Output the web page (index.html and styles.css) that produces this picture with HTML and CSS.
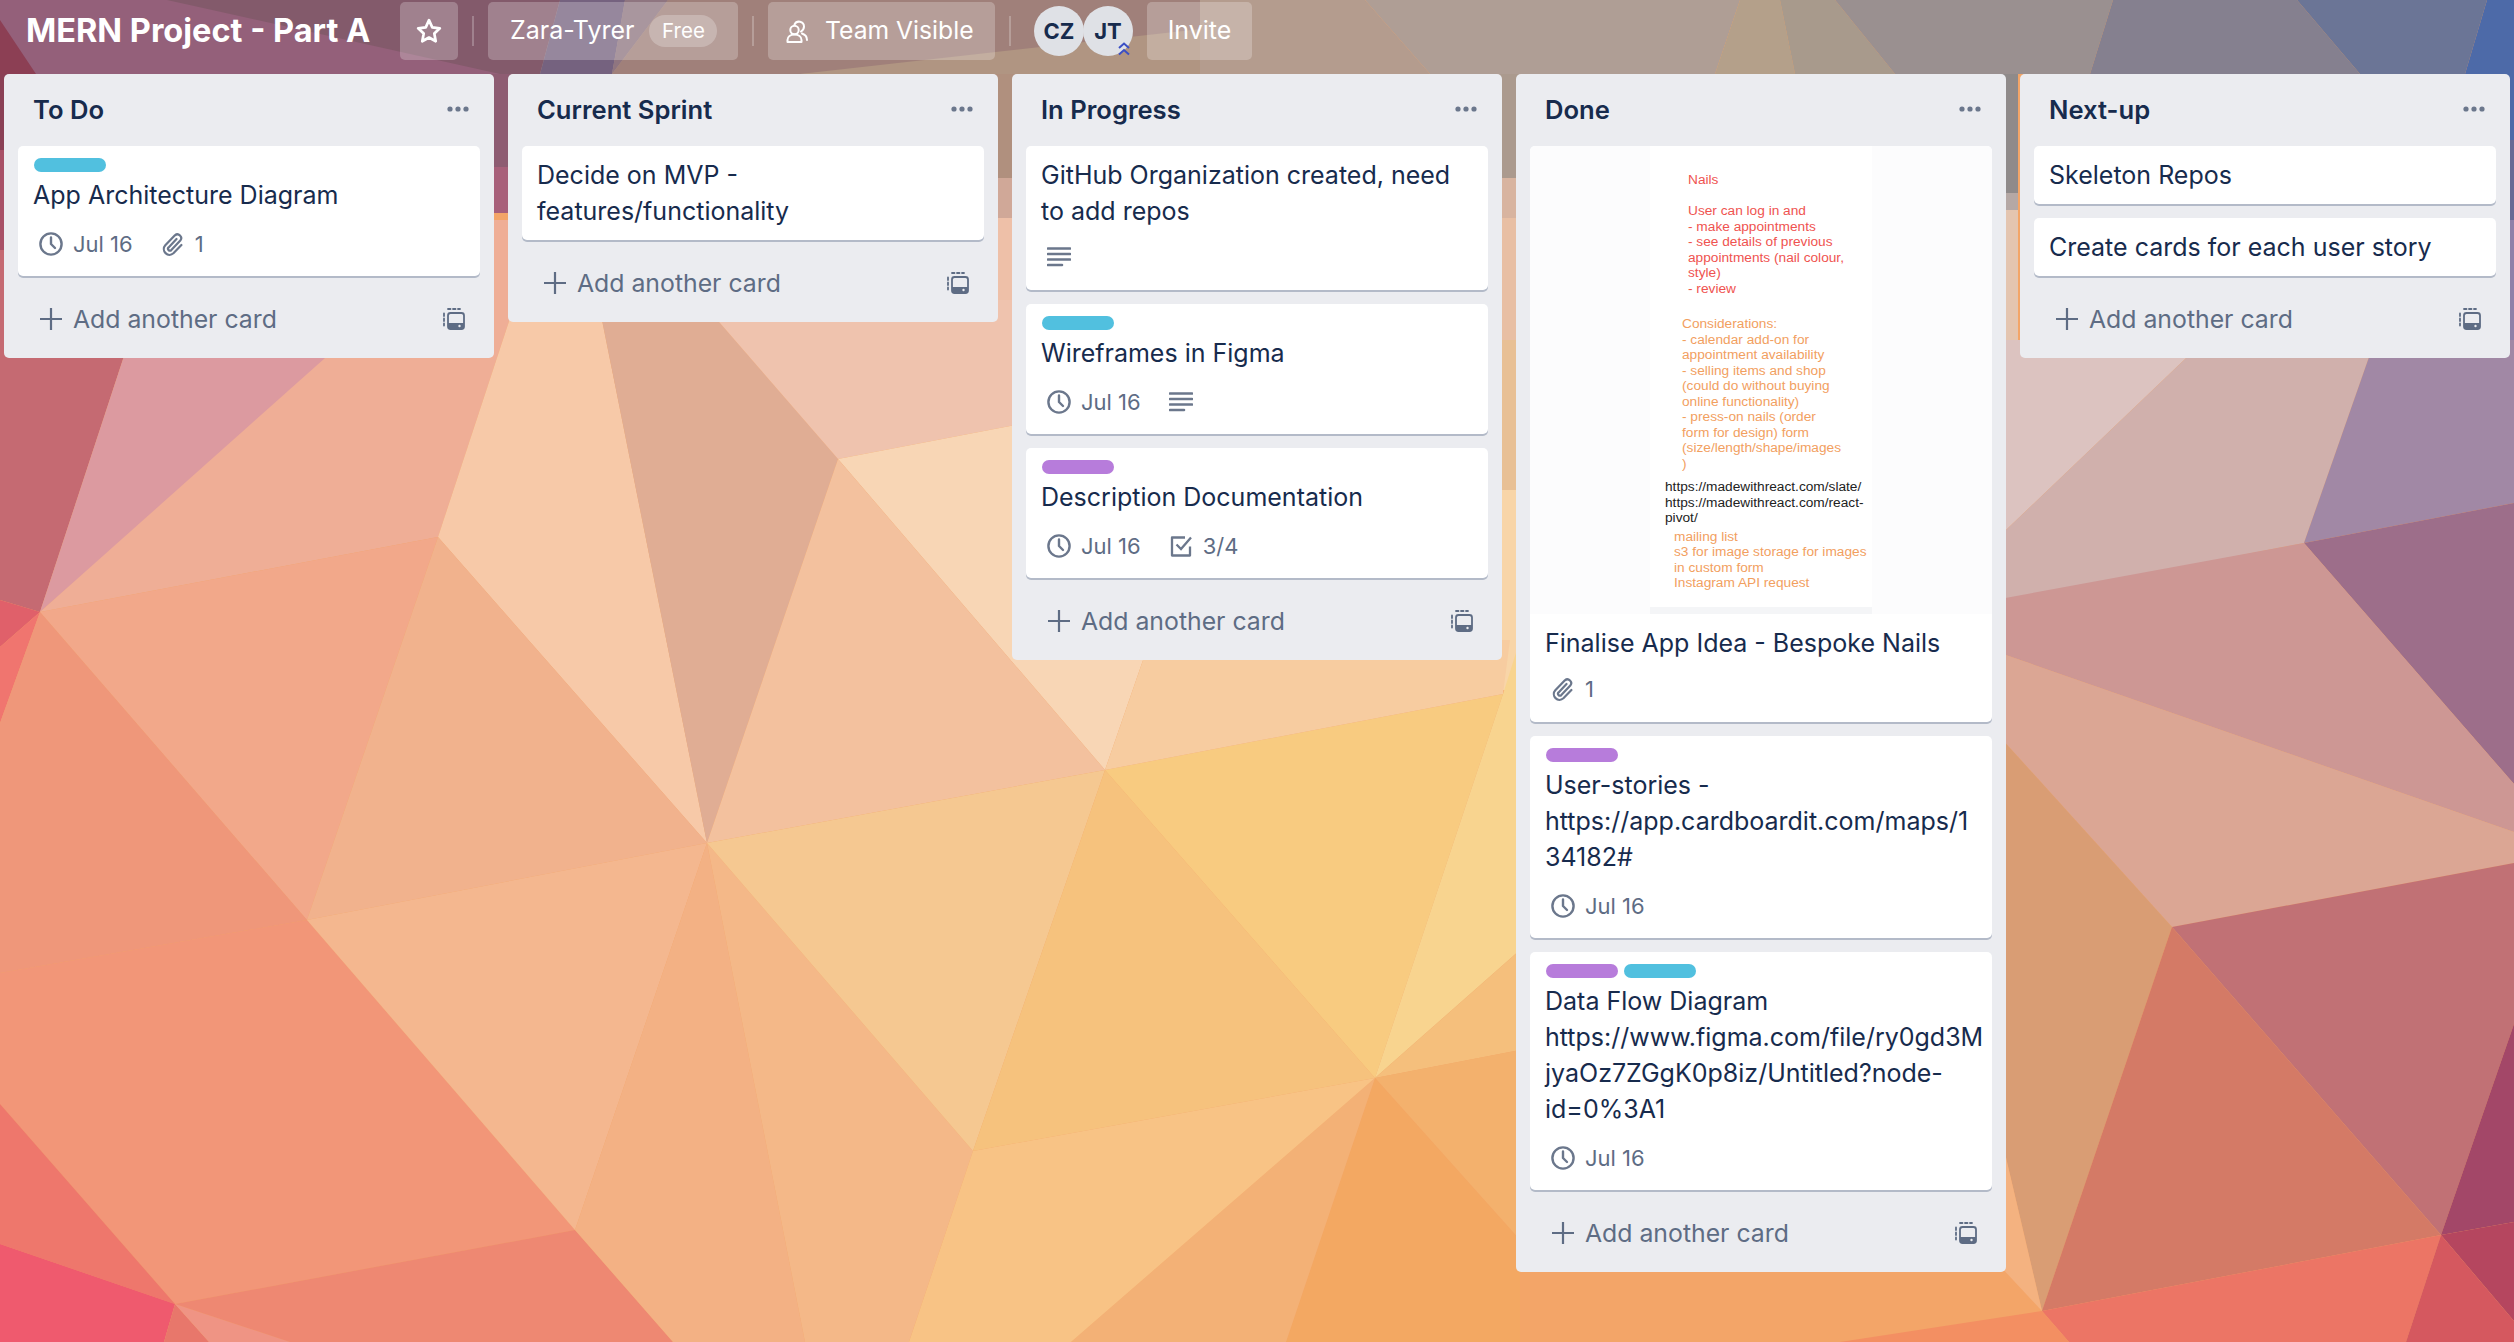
FILE: index.html
```html
<!DOCTYPE html>
<html lang="en">
<head>
  <meta charset="UTF-8" />
  <title>MERN Project - Part A</title>
  <link rel="stylesheet" href="styles.css">
</head>
<body>
  <!-- low-poly wallpaper -->
  <svg class="wallpaper" viewBox="0 0 2514 1342" preserveAspectRatio="none" aria-hidden="true">
    <rect width="2514" height="1342" fill="#f3a568"/>
    <!-- top strip -->
    <polygon points="0,0 1210,0 1210,74 0,74" fill="#a88e88"/>
    <polygon points="0,0 560,0 520,74 0,74" fill="#94607a"/>
    <polygon points="167,0 560,0 540,74 500,74" fill="#835a6b"/>
    <polygon points="0,20 36,74 0,74" fill="#8c3f54"/>
    <polygon points="560,0 625,0 612,74 540,74" fill="#75627f"/>
    <polygon points="625,0 668,0 612,74" fill="#8f7580"/>
    <polygon points="668,0 1210,0 1210,40 800,74 612,74" fill="#a0807a"/>
    <polygon points="800,74 1210,28 1210,74" fill="#b09582"/>
    <polygon points="1200,0 1365,0 1430,74 1200,74" fill="#b49c8e"/>
    <polygon points="1365,0 1740,0 1715,74 1430,74" fill="#af9e95"/>
    <polygon points="1740,0 1780,0 1795,74 1715,74" fill="#b4a08a"/>
    <polygon points="1780,0 1835,0 1895,74 1795,74" fill="#a89a8c"/>
    <polygon points="1835,0 2113,0 2090,74 1895,74" fill="#9a9090"/>
    <polygon points="2113,0 2297,0 2360,74 2090,74" fill="#85808f"/>
    <polygon points="2297,0 2487,0 2465,74 2360,74" fill="#6b7596"/>
    <polygon points="2487,0 2514,0 2514,74 2465,74" fill="#4d6aa8"/>
    <!-- slivers between the lists -->
    <rect x="0" y="74" width="10" height="76" fill="#8a4055"/>
    <rect x="0" y="150" width="10" height="100" fill="#a85066"/>
    <rect x="0" y="250" width="10" height="110" fill="#c56a72"/>
    <rect x="490" y="74" width="22" height="93" fill="#8e5c72"/>
    <rect x="490" y="167" width="22" height="46" fill="#a8607a"/>
    <rect x="994" y="74" width="22" height="104" fill="#b0907e"/>
    <rect x="994" y="178" width="22" height="40" fill="#d0a898"/>
    <rect x="994" y="218" width="22" height="122" fill="#eec0a8"/>
    <rect x="1498" y="74" width="22" height="104" fill="#ab9a8e"/>
    <rect x="1498" y="178" width="22" height="40" fill="#d8b4a0"/>
    <rect x="1498" y="218" width="22" height="122" fill="#e8bfa4"/>
    <rect x="1498" y="340" width="22" height="150" fill="#e8c095"/>
    <rect x="1498" y="490" width="22" height="200" fill="#f8d5a8"/>
    <rect x="1996" y="74" width="22" height="119" fill="#8f8a8a"/>
    <rect x="1996" y="193" width="22" height="17" fill="#b5a8a5"/>
    <rect x="1996" y="210" width="22" height="150" fill="#e4c5b0"/>
    <rect x="2500" y="74" width="14" height="66" fill="#4d6aa8"/>
    <rect x="2500" y="140" width="14" height="80" fill="#6a6a95"/>
    <rect x="2500" y="220" width="14" height="140" fill="#9080a8"/>
    <!-- lower left -->
    <polygon points="0,350 126,350 40,612 0,600" fill="#c56a72"/>
    <polygon points="0,600 40,612 0,647" fill="#e0606a"/>
    <polygon points="40,612 126,350 332,358" fill="#dc9aa0"/>
    <polygon points="40,612 480,220 520,220 516,300 438,537" fill="#efae96"/>
    <polygon points="516,300 598,300 707,843 438,537" fill="#f7c9a8"/>
    <polygon points="598,300 700,300 838,459 707,843" fill="#e0ad94"/>
    <polygon points="700,300 1020,300 1020,424 838,459" fill="#efc3ae"/>
    <polygon points="838,459 1020,424 1150,640 1105,770" fill="#f8d6b5"/>
    <polygon points="838,459 1105,770 707,843" fill="#f3c19e"/>
    <polygon points="40,612 438,537 307,920" fill="#f2a88a"/>
    <polygon points="438,537 707,843 307,920" fill="#f1b28d"/>
    <polygon points="0,647 40,612 0,723" fill="#f0756f"/>
    <polygon points="40,612 307,920 0,973 0,723" fill="#ef977a"/>
    <polygon points="307,920 575,1230 175,1304 0,1104 0,973" fill="#f29678"/>
    <polygon points="0,1104 175,1304 0,1244" fill="#ee776c"/>
    <polygon points="0,1244 175,1304 164,1342 0,1342" fill="#ef5a6e"/>
    <polygon points="175,1304 209,1342 164,1342" fill="#e8776b"/>
    <polygon points="175,1304 290,1342 209,1342" fill="#ef9484"/>
    <polygon points="175,1304 575,1230 673,1342 290,1342" fill="#ee8872"/>
    <!-- middle -->
    <polygon points="307,920 707,843 575,1230" fill="#f4b78f"/>
    <polygon points="707,843 805,1342 673,1342 575,1230" fill="#f3b184"/>
    <polygon points="707,843 973,1151 909,1342 805,1342" fill="#f4b888"/>
    <polygon points="707,843 1105,770 973,1151" fill="#f5c891"/>
    <polygon points="1105,770 1375,1078 973,1151" fill="#f6c27d"/>
    <polygon points="1105,770 1503,694 1375,1078" fill="#f8cb80"/>
    <polygon points="1150,640 1510,640 1503,694 1105,770" fill="#f7cca0"/>
    <polygon points="1503,694 1520,640 1520,950 1375,1078" fill="#f8d48f"/>
    <polygon points="1375,1078 1520,950 1520,1050" fill="#f5bf7c"/>
    <polygon points="1375,1078 1520,1050 1520,1240" fill="#f3b16d"/>
    <polygon points="1375,1078 1520,1240 1520,1342 1286,1342" fill="#f3a862"/>
    <polygon points="1375,1078 1286,1342 1071,1342" fill="#f3b176"/>
    <polygon points="973,1151 1375,1078 1071,1342 909,1342" fill="#f8c385"/>
    <!-- right side -->
    <polygon points="2000,340 2205,340 2006,530" fill="#dcc3c0"/>
    <polygon points="2006,530 2205,340 2375,340 2304,543 2000,602" fill="#d0b0ac"/>
    <polygon points="2304,543 2375,340 2514,340 2514,503" fill="#a188a5"/>
    <polygon points="2304,543 2514,503 2514,784" fill="#9d6e8a"/>
    <polygon points="2000,599 2304,543 2514,784 2514,832 2000,653" fill="#cd9794"/>
    <polygon points="2000,653 2514,832 2514,863 2172,927 2000,737" fill="#dba694"/>
    <polygon points="2000,737 2172,927 2042,1311 2000,1132" fill="#d99d74"/>
    <polygon points="2172,927 2514,863 2514,1024 2441,1235" fill="#c17175"/>
    <polygon points="2172,927 2441,1235 2042,1311" fill="#d47a66"/>
    <polygon points="2441,1235 2514,1024 2514,1222" fill="#a34768"/>
    <polygon points="2441,1235 2514,1222 2514,1321" fill="#b5465f"/>
    <polygon points="2441,1235 2406,1342 2069,1342 2042,1311" fill="#ec7565"/>
    <polygon points="2441,1235 2514,1321 2514,1342 2406,1342" fill="#d5585f"/>
    <polygon points="2000,1132 2042,1311 2000,1266" fill="#f4b280"/>
    <polygon points="1840,1342 2042,1311 2069,1342" fill="#f38f62"/>
  </svg>

  <!-- shared icons -->
  <svg class="sprite" aria-hidden="true">
    <symbol id="i-clock" viewBox="0 0 24 24">
      <circle cx="12" cy="12" r="10.600" fill="none" stroke="currentColor" stroke-width="2.400"/>
      <path d="M12 5.500V12l4 4" fill="none" stroke="currentColor" stroke-width="2.400" stroke-linecap="round" stroke-linejoin="round"/>
    </symbol>
    <symbol id="i-clip" viewBox="0 0 24 24">
      <path d="M15.500 7 7.600 15.400a1.900 1.900 0 0 0 2.700 2.700l9-9.500a3.800 3.800 0 0 0-5.400-5.300l-9.600 10a5.700 5.700 0 0 0 8.100 8l8-8.300" fill="none" stroke="currentColor" stroke-width="2.200" stroke-linecap="round" stroke-linejoin="round"/>
    </symbol>
    <symbol id="i-desc" viewBox="0 0 24 24">
      <path d="M1 3.500h22M1 9h22M1 14.500h22M1 20h14" fill="none" stroke="currentColor" stroke-width="2.600" stroke-linecap="round"/>
    </symbol>
    <symbol id="i-check" viewBox="0 0 24 24">
      <path d="M21 12.500V21.500H3V3.500H16" fill="none" stroke="currentColor" stroke-width="2.300" stroke-linejoin="round"/>
      <path d="M7.500 10.500l4.500 4.500L22 3.500" fill="none" stroke="currentColor" stroke-width="2.300"/>
    </symbol>
    <symbol id="i-plus" viewBox="0 0 22 22">
      <path d="M11 0v22M0 11h22" fill="none" stroke="currentColor" stroke-width="2.200"/>
    </symbol>
    <symbol id="i-template" viewBox="0 0 22 22">
      <path d="M1 5.500v2.500M1 10.500v2.500M1 15.500v2M5 1h2.500M10 1h2.500M15 1h2" fill="none" stroke="currentColor" stroke-width="1.800" stroke-linecap="round"/>
      <rect x="5" y="5" width="16" height="16" rx="2.500" fill="none" stroke="currentColor" stroke-width="1.800"/>
      <path d="M5 15h16v4a2 2 0 0 1-2 2H7a2 2 0 0 1-2-2z" fill="currentColor"/>
      <circle cx="16.500" cy="18" r="1.200" fill="#ebecf0"/>
    </symbol>
    <symbol id="i-dots" viewBox="0 0 22 6">
      <circle cx="3" cy="3" r="2.600" fill="currentColor"/>
      <circle cx="11" cy="3" r="2.600" fill="currentColor"/>
      <circle cx="19" cy="3" r="2.600" fill="currentColor"/>
    </symbol>
  </svg>

  <header class="board-header">
    <h1 class="board-name">MERN Project - Part A</h1>
    <button class="hbtn star-btn">
      <svg class="star" viewBox="0 0 24 24"><path d="M12 2l3 6.600 7 .9-5.100 4.900 1.300 7.100L12 18l-6.200 3.500 1.300-7.100L2 9.500l7-.9z" fill="none" stroke="#fff" stroke-width="2.500" stroke-linejoin="round"/></svg>
    </button>
    <span class="sep"></span>
    <button class="hbtn org-btn">Zara-Tyrer <span class="pill">Free</span></button>
    <span class="sep sep-wide"></span>
    <button class="hbtn team-btn">
      <svg class="team" viewBox="0 0 24 24">
        <path d="M9.500 5.500a5 5 0 0 1 9.500 2c0 2.400-1.400 4-3 5M17 14.500c3 1 5 3.500 5 6.500" fill="none" stroke="#fff" stroke-width="2" stroke-linecap="round"/>
        <circle cx="9.500" cy="11" r="4.200" fill="none" stroke="#fff" stroke-width="2"/>
        <path d="M2.500 23v-2c0-3.500 3-5.500 7-5.500s7 2 7 5.500v2z" fill="none" stroke="#fff" stroke-width="2" stroke-linejoin="round"/>
      </svg>
      Team Visible
    </button>
    <span class="sep sep-team"></span>
    <div class="members">
      <span class="avatar">CZ</span>
      <span class="avatar avatar-admin">JT
        <svg class="admin-mark" viewBox="0 0 14 14"><path d="M2 6l5-4.500L12 6M2 12.500L7 8l5 4.500" fill="none" stroke="#3b4fc4" stroke-width="2"/></svg>
      </span>
    </div>
    <button class="hbtn invite-btn">Invite</button>
  </header>

  <main class="board">
    <section class="list">
      <div class="list-head">
        <h2>To Do</h2>
        <svg class="dots"><use href="#i-dots"/></svg>
      </div>
      <article class="card">
        <div class="labels"><span class="label blue"></span></div>
        <p class="card-title">App Architecture Diagram</p>
        <div class="badges">
          <span class="badge"><svg class="ico"><use href="#i-clock"/></svg>Jul 16</span>
          <span class="badge"><svg class="ico"><use href="#i-clip"/></svg>1</span>
        </div>
      </article>
      <div class="add-row">
        <svg class="plus"><use href="#i-plus"/></svg>
        <span class="add-text">Add another card</span>
        <svg class="tpl"><use href="#i-template"/></svg>
      </div>
    </section>

    <section class="list">
      <div class="list-head">
        <h2>Current Sprint</h2>
        <svg class="dots"><use href="#i-dots"/></svg>
      </div>
      <article class="card">
        <p class="card-title">Decide on MVP - features/functionality</p>
      </article>
      <div class="add-row">
        <svg class="plus"><use href="#i-plus"/></svg>
        <span class="add-text">Add another card</span>
        <svg class="tpl"><use href="#i-template"/></svg>
      </div>
    </section>

    <section class="list">
      <div class="list-head">
        <h2>In Progress</h2>
        <svg class="dots"><use href="#i-dots"/></svg>
      </div>
      <article class="card">
        <p class="card-title">GitHub Organization created, need to add repos</p>
        <div class="badges">
          <span class="badge"><svg class="ico"><use href="#i-desc"/></svg></span>
        </div>
      </article>
      <article class="card">
        <div class="labels"><span class="label blue"></span></div>
        <p class="card-title">Wireframes in Figma</p>
        <div class="badges">
          <span class="badge"><svg class="ico"><use href="#i-clock"/></svg>Jul 16</span>
          <span class="badge"><svg class="ico"><use href="#i-desc"/></svg></span>
        </div>
      </article>
      <article class="card">
        <div class="labels"><span class="label purple"></span></div>
        <p class="card-title">Description Documentation</p>
        <div class="badges">
          <span class="badge"><svg class="ico"><use href="#i-clock"/></svg>Jul 16</span>
          <span class="badge"><svg class="ico"><use href="#i-check"/></svg>3/4</span>
        </div>
      </article>
      <div class="add-row">
        <svg class="plus"><use href="#i-plus"/></svg>
        <span class="add-text">Add another card</span>
        <svg class="tpl"><use href="#i-template"/></svg>
      </div>
    </section>

    <section class="list">
      <div class="list-head">
        <h2>Done</h2>
        <svg class="dots"><use href="#i-dots"/></svg>
      </div>
      <article class="card card-cover">
        <div class="cover">
          <div class="sheet">
            <p class="note note-red">Nails<br><br>User can log in and<br>- make appointments<br>- see details of previous<br>appointments (nail colour,<br>style)<br>- review</p>
            <p class="note note-orange note-plans">Considerations:<br>- calendar add-on for<br>appointment availability<br>- selling items and shop<br>(could do without buying<br>online functionality)<br>- press-on nails (order<br>form for design) form<br>(size/length/shape/images<br>)</p>
            <p class="note note-black">https://madewithreact.com/slate/<br>https://madewithreact.com/react-<br>pivot/</p>
            <p class="note note-orange note-extra">mailing list<br>s3 for image storage for images<br>in custom form<br>Instagram API request</p>
          </div>
        </div>
        <p class="card-title">Finalise App Idea - Bespoke Nails</p>
        <div class="badges">
          <span class="badge"><svg class="ico"><use href="#i-clip"/></svg>1</span>
        </div>
      </article>
      <article class="card">
        <div class="labels"><span class="label purple"></span></div>
        <p class="card-title card-url">User-stories -<br>https://app.cardboardit.com/maps/1<br>34182#</p>
        <div class="badges">
          <span class="badge"><svg class="ico"><use href="#i-clock"/></svg>Jul 16</span>
        </div>
      </article>
      <article class="card">
        <div class="labels"><span class="label purple"></span><span class="label blue"></span></div>
        <p class="card-title card-url">Data Flow Diagram<br>https://www.figma.com/file/ry0gd3M<br>jyaOz7ZGgK0p8iz/Untitled?node-<br>id=0%3A1</p>
        <div class="badges">
          <span class="badge"><svg class="ico"><use href="#i-clock"/></svg>Jul 16</span>
        </div>
      </article>
      <div class="add-row">
        <svg class="plus"><use href="#i-plus"/></svg>
        <span class="add-text">Add another card</span>
        <svg class="tpl"><use href="#i-template"/></svg>
      </div>
    </section>

    <section class="list">
      <div class="list-head">
        <h2>Next-up</h2>
        <svg class="dots"><use href="#i-dots"/></svg>
      </div>
      <article class="card">
        <p class="card-title">Skeleton Repos</p>
      </article>
      <article class="card">
        <p class="card-title">Create cards for each user story</p>
      </article>
      <div class="add-row">
        <svg class="plus"><use href="#i-plus"/></svg>
        <span class="add-text">Add another card</span>
        <svg class="tpl"><use href="#i-template"/></svg>
      </div>
    </section>
  </main>
</body>
</html>
```

FILE: styles.css
```css
* {
  box-sizing: border-box;
}
html, body {
  margin: 0;
  height: 100%;
}
body {
  position: relative;
  width: 2514px;
  height: 1342px;
  overflow: hidden;
  font-family: Inter, "Noto Sans", sans-serif;
  color: #172b4d;
  background: #f3a568;
}
p, h1, h2 {
  margin: 0;
}
.wallpaper {
  position: absolute;
  top: 0;
  left: 0;
  width: 100%;
  height: 100%;
}
.sprite {
  position: absolute;
  width: 0;
  height: 0;
}

/* header */
.board-header {
  position: relative;
  display: flex;
  align-items: flex-start;
  height: 74px;
  padding: 2px 0 0 26px;
}
.board-name {
  width: 374px;
  height: 58px;
  font-size: 32.500px;
  font-weight: 700;
  line-height: 57px;
  color: #fff;
  white-space: nowrap;
}
.hbtn {
  display: flex;
  align-items: center;
  height: 58px;
  padding-bottom: 2px;
  border: none;
  border-radius: 5px;
  font-family: inherit;
  font-size: 25px;
  color: #fff;
  background: rgba(255, 255, 255, 0.24);
}
.star-btn {
  justify-content: center;
  width: 58px;
  padding: 0;
}
.star {
  width: 26px;
  height: 26px;
}
.sep {
  width: 2px;
  height: 30px;
  margin: 14px 14px 0;
  background: rgba(255, 255, 255, 0.24);
}
.org-btn {
  gap: 15px;
  width: 250px;
  padding: 0 0 2px 22px;
}
.pill {
  width: 68px;
  height: 32px;
  margin-top: 2px;
  border-radius: 16px;
  font-size: 20.500px;
  line-height: 32px;
  text-align: center;
  background: rgba(255, 255, 255, 0.24);
}
.team-btn {
  gap: 16px;
  width: 227px;
  padding: 0 0 2px 17px;
  font-size: 24.700px;
}
.team {
  width: 24px;
  height: 24px;
  margin-top: 2px;
}
.members {
  display: flex;
  margin: 4px 14px 0 8px;
}
.sep-team {
  margin-right: 15px;
}
.avatar {
  position: relative;
  width: 50px;
  height: 50px;
  border-radius: 50%;
  font-size: 22px;
  font-weight: 700;
  line-height: 50px;
  text-align: center;
  background: #dfe1e6;
}
.avatar-admin {
  margin-left: -1px;
}
.admin-mark {
  position: absolute;
  right: 2px;
  bottom: 0;
  width: 14px;
  height: 14px;
}
.invite-btn {
  justify-content: center;
  width: 105px;
  padding: 0 0 2px;
}

/* lists */
.board {
  position: relative;
  display: flex;
  align-items: flex-start;
  gap: 14px;
  padding: 0 4px;
}
.list {
  flex: none;
  width: 490px;
  padding: 0 14px 10px;
  border-radius: 5px;
  background: #ebecf0;
}
.list-head {
  display: flex;
  align-items: center;
  justify-content: space-between;
  height: 72px;
  padding: 0 11px 2px 15px;
}
.list-head h2 {
  font-size: 25.600px;
  font-weight: 600;
}
.dots {
  width: 22px;
  height: 6px;
  color: #6b778c;
}

/* cards */
.card {
  margin-bottom: 14px;
  padding: 11px 13px 11px 15px;
  border-radius: 5px;
  background: #fff;
  box-shadow: 0 2px 0 #b3bac8;
}
.card-title {
  font-size: 25px;
  line-height: 36px;
  overflow-wrap: anywhere;
}
.card-url {
  white-space: nowrap;
}
.labels {
  display: flex;
  gap: 6px;
  margin: 1px 0 5px 1px;
}
.label {
  width: 72px;
  height: 14px;
  border-radius: 7px;
}
.blue {
  background: #51c0df;
}
.purple {
  background: #b77cdb;
}
.badges {
  display: flex;
  gap: 28px;
  height: 36px;
  margin-top: 10px;
  margin-bottom: 4px;
  padding-left: 6px;
}
.labels ~ .badges {
  margin-top: 13px;
  margin-bottom: 3px;
}
.badge {
  display: flex;
  align-items: center;
  gap: 10px;
  font-size: 22px;
  color: #5e6c84;
}
.ico {
  width: 24px;
  height: 24px;
  color: #6b778c;
}

/* card with an attachment picture */
.card-cover {
  padding-top: 0;
}
.cover {
  display: flex;
  justify-content: center;
  height: 468px;
  margin: 0 -13px 11px -15px;
  border-radius: 5px 5px 0 0;
  background: #fcfcfd;
}
.sheet {
  width: 222px;
  height: 468px;
  padding-top: 26px;
  border-bottom: 7px solid #f4f5f7;
  background: #fff;
}
.note {
  font-family: "Liberation Sans", Arial, sans-serif;
  font-size: 13.700px;
  line-height: 15.500px;
  white-space: nowrap;
}
.note-red {
  margin-left: 38px;
  color: #ef5350;
}
.note-orange {
  color: #f2a05f;
}
.note-plans {
  margin: 20px 0 0 32px;
}
.note-black {
  margin: 8px 0 0 15px;
  color: #222;
}
.note-extra {
  margin: 3px 0 0 24px;
}

/* add row */
.add-row {
  display: flex;
  align-items: center;
  height: 58px;
  padding: 0 0 0 22px;
  color: #5e6c84;
}
.plus {
  width: 22px;
  height: 22px;
}
.add-text {
  margin-left: 11px;
  font-size: 24.800px;
}
.tpl {
  width: 22px;
  height: 22px;
  margin: 0 15px 0 auto;
}
```
